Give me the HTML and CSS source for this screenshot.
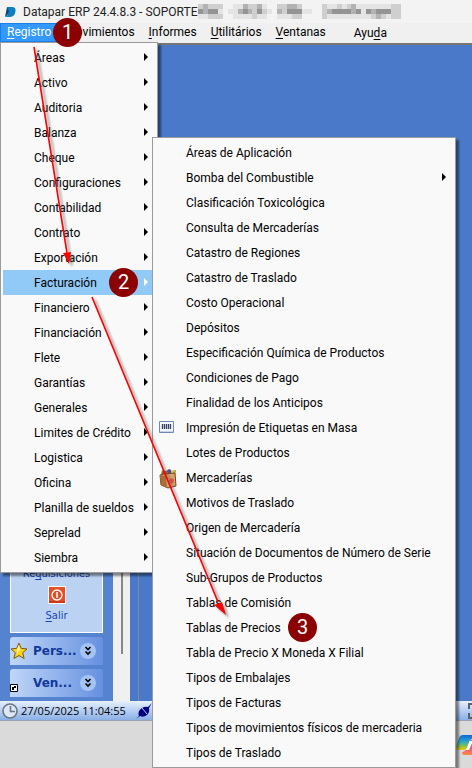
FILE: index.html
```
<!DOCTYPE html>
<html lang="es">
<head>
<meta charset="utf-8">
<meta name="viewport" content="width=device-width, initial-scale=1">
<title>Datapar ERP 24.4.8.3</title>
<link rel="stylesheet" href="styles.css">
</head>
<body>
<header class="titlebar">
  <svg class="logo" width="12" height="12" viewBox="0 0 12 12" aria-hidden="true"><path d="M2 1h5q4 0 3.500 4Q10 11 4 11H0q3-1 3-4z" fill="#0b7fc0"/><path d="M2 1l2 4-1 3q-1 2-3 3z" fill="#0a4b73"/></svg>
  <h1 class="title">Datapar ERP 24.4.8.3 - SOPORTE</h1>
  <svg class="mosaic" width="203" height="15" viewBox="0 0 41 3" preserveAspectRatio="none" shape-rendering="crispEdges" aria-hidden="true">
    <path fill="#e4e4e4" d="M0 0h5v3H0zM6 1h1v1H6zM7 0h7v3H7zM14 1h1v1h-1zM16 0h5v3h-5zM21 1h2v1h-2zM25 0h16v3H25z"/>
    <path fill="#cfcfcf" d="M0 0h5v1H0zM2 2h3v1H2zM8 1h6v1H8zM9 0h4v1H9zM11 2h1v1h-1zM16 0h5v1h-5zM17 1h1v1h-1zM19 2h2v1h-2zM25 0h1v3h-1zM28 0h1v1h-1zM30 0h2v1h-2zM39 0h2v3h-2zM35 2h3v1h-3z"/>
    <path fill="#b2b2b2" d="M1 0h1v2H1zM9 0h1v1H9zM12 0h1v1h-1zM8 1h1v1H8zM10 1h1v1h-1zM16 1h1v1h-1zM18 0h2v1h-2zM26 1h1v1h-1zM31 0h1v2h-1zM35 1h1v1h-1zM36 2h1v1h-1z"/>
    <path fill="#949494" d="M0 1h1v1H0zM2 1h2v1H2zM9 1h1v1H9zM12 1h1v1h-1zM18 1h3v1h-3zM27 1h4v1h-4zM32 1h1v1h-1zM34 1h1v1h-1zM36 1h3v1h-3z"/>
  </svg>
</header>
<nav class="menubar">
  <button class="menu-title open"><u>R</u>egistro</button>
  <button class="menu-title"><u>M</u>ovimientos</button>
  <button class="menu-title"><u>I</u>nformes</button>
  <button class="menu-title"><u>U</u>tilitários</button>
  <button class="menu-title"><u>V</u>entanas</button>
  <button class="menu-title help">Ayu<u>d</u>a</button>
</nav>
<main class="workspace">
  <aside class="sidebar">
    <div class="panel">
      <a href="#">Re<u>q</u>uisiciones</a>
      <svg width="18" height="18" viewBox="0 0 18 18" aria-hidden="true"><path fill="#fff" d="M0 0h18v18H0z"/><path fill="#e35028" d="M1 1h16v16H1z"/><path fill="#c83a18" d="M1 15h16v2H1z"/><circle cx="9" cy="9" r="5" fill="none" stroke="#fff" stroke-width="1.300"/><path stroke="#fff" stroke-width="1.500" d="M9 6v6"/></svg>
      <a href="#"><u>S</u>alir</a>
    </div>
    <button class="group">
      <svg width="18" height="18" viewBox="0 0 18 18" aria-hidden="true"><path d="M9 1l2.300 5.400 5.700.5-4.300 3.800 1.400 5.800L9 13.500l-5.100 3 1.400-5.800L1 6.900l5.700-.5z" fill="#fbd21c" stroke="#7a5a10"/><path d="M9 3l1 5-3 4 0-5z" fill="#fff3a0"/></svg>
      <span>Pers...</span>
      <svg width="16" height="16" viewBox="0 0 16 16" aria-hidden="true"><circle cx="8" cy="8" r="8" fill="#a5c3f3"/><path d="M5.500 4L8 6.500 10.500 4M5.500 8.500L8 11l2.500-2.500" fill="none" stroke="#000" stroke-width="1.600"/></svg>
    </button>
    <button class="group">
      <svg width="18" height="18" viewBox="0 0 18 18" aria-hidden="true"><path d="M.5 10.500h7v7h-7z" fill="#fff" stroke="#000"/><path d="M2 16v-3h2v-1h2v2H4v2z"/></svg>
      <span>Ven...</span>
      <svg width="16" height="16" viewBox="0 0 16 16" aria-hidden="true"><circle cx="8" cy="8" r="8" fill="#a5c3f3"/><path d="M5.500 4L8 6.500 10.500 4M5.500 8.500L8 11l2.500-2.500" fill="none" stroke="#000" stroke-width="1.600"/></svg>
    </button>
  </aside>
  <div class="scroll-track"><div class="scroll-thumb"></div></div>
  <div class="desktop"></div>
</main>
<footer class="statusbar">
  <svg width="16" height="16" viewBox="0 0 16 16" aria-hidden="true"><circle cx="8" cy="8" r="7" fill="#dce8f8" stroke="#6d7680" stroke-width="1.600"/><path d="M8.500 3v5.500H13" fill="none" stroke="#6d7680" stroke-width="1.600"/></svg>
  <time class="clock">27/05/2025 11:04:55</time>
  <svg width="16" height="16" viewBox="0 0 16 16" aria-hidden="true"><path d="M0 16l3-3q-2-5 3-8 3-2 6-1l4-4-3 5q1 4-2 7-4 3-7 1z" fill="#000080"/><path d="M6 5l5 6" stroke="#b8cdf0"/></svg>
  <svg class="frame-icon" width="16" height="16" viewBox="0 0 16 16" aria-hidden="true"><path d="M5 1H1v5M1 10v5h4M11 1h4v5M15 10v5h-4" fill="none" stroke="#59636e" stroke-width="2"/></svg>
</footer>
<div class="taskbar">
  <svg width="24" height="22" viewBox="0 0 24 22" aria-hidden="true">
    <defs><linearGradient id="cool" x1="0" y1="0" x2="0" y2="1"><stop offset="0" stop-color="#1565d8"/><stop offset=".45" stop-color="#25a9c8"/><stop offset=".75" stop-color="#8bc34a"/><stop offset="1" stop-color="#f5c400"/></linearGradient><linearGradient id="warm" x1="0" y1="0" x2="0" y2="1"><stop offset="0" stop-color="#9b5cf0"/><stop offset=".5" stop-color="#f0508c"/><stop offset="1" stop-color="#ff8a3c"/></linearGradient></defs>
    <path d="M17 21H8q-2 0-2-3 3 0 4-3l2-6q1-3 4-3h5q4 0 2 6l-2 6q-1 3-4 3z" fill="url(#warm)"/>
    <path d="M13 7h4l-4 9H9z" fill="#fff"/>
    <path d="M7 1h9q2 0 3 4h-3q-2 0-3 3l-2 6q-1 2-3 2H3q-4 0-2-6l2-6q1-3 4-3z" fill="url(#cool)"/>
  </svg>
</div>

<ul class="menu menu-main">
  <li><button class="sub">Áreas</button></li>
  <li><button class="sub">Activo</button></li>
  <li><button class="sub">Auditoria</button></li>
  <li><button class="sub">Balanza</button></li>
  <li><button class="sub">Cheque</button></li>
  <li><button class="sub">Configuraciones</button></li>
  <li><button class="sub">Contabilidad</button></li>
  <li><button class="sub">Contrato</button></li>
  <li><button class="sub">Exportación</button></li>
  <li><button class="sub selected">Facturación</button></li>
  <li><button class="sub">Financiero</button></li>
  <li><button class="sub">Financiación</button></li>
  <li><button class="sub">Flete</button></li>
  <li><button class="sub">Garantías</button></li>
  <li><button class="sub">Generales</button></li>
  <li><button class="sub">Limites de Crédito</button></li>
  <li><button class="sub">Logistica</button></li>
  <li><button class="sub">Oficina</button></li>
  <li><button class="sub">Planilla de sueldos</button></li>
  <li><button class="sub">Seprelad</button></li>
  <li><button class="sub">Siembra</button></li>
</ul>
<ul class="menu menu-sub">
  <li><button>Áreas de Aplicación</button></li>
  <li><button class="sub">Bomba del Combustible</button></li>
  <li><button>Clasificación Toxicológica</button></li>
  <li><button>Consulta de Mercaderías</button></li>
  <li><button>Catastro de Regiones</button></li>
  <li><button>Catastro de Traslado</button></li>
  <li><button>Costo Operacional</button></li>
  <li><button>Depósitos</button></li>
  <li><button>Especificación Química de Productos</button></li>
  <li><button>Condiciones de Pago</button></li>
  <li><button>Finalidad de los Anticipos</button></li>
  <li><button><svg class="item-icon" width="16" height="16" viewBox="0 0 16 16" aria-hidden="true"><path d="M.5 2.500h14v11H.5z" fill="#f4f7fd" stroke="#6f86b8"/><path d="M1 12h13v1H1z" fill="#c7d3ea"/><path d="M3.500 5v5M5.500 5v5M7.500 5v5M9.500 5v5M11.500 5v5" stroke="#34405c" stroke-width="1.300"/></svg>Impresión de Etiquetas en Masa</button></li>
  <li><button>Lotes de Productos</button></li>
  <li><button><svg class="item-icon" width="18" height="20" viewBox="0 0 18 20" aria-hidden="true"><path d="M2 5l1-4 4 1 3-2 3 2 4-1-1 5z" fill="#6a9a35"/><path d="M8 2l3-2 2 3-3 2z" fill="#5540c0"/><path d="M12 2l4-1-1 5-3-1z" fill="#e4c030"/><path d="M3 3l4-1 1 3-4 1z" fill="#d03828"/><path d="M1 6l4-1 11-1 1 13-8 2-7-3z" fill="#d8a26c" stroke="#76451f"/><path d="M1 6l6 1 1 12-6-3z" fill="#a86d3a"/><path d="M11 9l4 1v3l-3 2-2-3z" fill="#d85a45"/></svg>Mercaderías</button></li>
  <li><button>Motivos de Traslado</button></li>
  <li><button>Origen de Mercadería</button></li>
  <li><button>Situación de Documentos de Número de Serie</button></li>
  <li><button>Sub-Grupos de Productos</button></li>
  <li><button>Tablas de Comisión</button></li>
  <li><button>Tablas de Precios</button></li>
  <li><button>Tabla de Precio X Moneda X Filial</button></li>
  <li><button>Tipos de Embalajes</button></li>
  <li><button>Tipos de Facturas</button></li>
  <li><button>Tipos de movimientos físicos de mercaderia</button></li>
  <li><button>Tipos de Traslado</button></li>
</ul>

<svg class="arrows" width="240" height="630" viewBox="0 0 240 630" aria-hidden="true">
  <g class="arrow-shadow" transform="translate(3 3)"><path d="M34 47l33 206M92 297l126 305" stroke="#555" stroke-width="2"/><path d="M63 253l8-1-2 12zM214 605l8-3 4 13z" fill="#555"/></g>
  <path d="M34 47l33 206M92 297l126 305" stroke="#f00" stroke-width="1.600"/><path d="M63 253l8-1-2 12zM214 605l8-3 4 13z" fill="#f00"/>
</svg>
<span class="step step-1">1</span>
<span class="step step-2">2</span>
<span class="step step-3">3</span>
</body>
</html>
```
FILE: styles.css
```
* { box-sizing: border-box; }
body {
  position: relative;
  margin: 0;
  min-height: 100vh;
  display: flex;
  flex-direction: column;
  overflow-x: hidden;
  font: 12px/16px Roboto, "Open Sans", sans-serif;
  color: #000;
  background: #dadada;
}
button { margin: 0; padding: 0; border: 0; background: none; font: inherit; color: inherit; text-align: left; white-space: nowrap; }
u { text-underline-offset: 2px; }
svg { display: block; flex: none; }

.titlebar { display: flex; align-items: center; height: 23px; padding-left: 5px; background: #f3f3f3; }
.title { margin: 0 0 0 6px; font-size: 12px; font-weight: 400; color: #222; white-space: nowrap; }
.menubar { display: flex; height: 22px; background: #f0f0f0; border-bottom: 2px solid #777; }
.menu-title { height: 19px; padding: 0 7px 1px; }
.menu-title.open { background: #3399ff; color: #fff; box-shadow: inset 0 0 0 1px #1a80e6; }
.menu-title.help { margin-left: 14px; padding: 1px 7px 0; }

.workspace { flex: 1; display: flex; align-items: stretch; background: #4a79c9; border-bottom: 1px solid #e8eef8; }
.sidebar { width: 113px; padding: 0 10px 4px; display: flex; flex-direction: column; justify-content: flex-end; gap: 4px; background: #5583cf; }
.panel { display: flex; flex-direction: column; align-items: center; padding-bottom: 8px; border: 1px solid #fff; border-top: 0; background: #bcd2f2; font: 11px/16px "DejaVu Sans Condensed", "Open Sans", sans-serif; }
.panel a { color: #1545b5; text-decoration: none; }
.panel svg { margin: 4px 0; }
.group { display: flex; align-items: center; height: 28px; border-radius: 3px 3px 0 0; background: linear-gradient(90deg, #bfd6f7, #6690e0); }
.group span { flex: 1; padding-left: 5px; font: bold 12px/16px "DejaVu Sans", sans-serif; color: #10389a; }
.group svg:last-child { margin-right: 7px; }
.scroll-track { width: 17px; display: flex; justify-content: center; padding-bottom: 47px; background: #f0f0f0; }
.scroll-thumb { width: 2px; background: #888; }
.desktop { flex: 1; margin-left: 8px; border-left: 1px solid #8a8a8a; }

.statusbar { display: flex; align-items: center; height: 19px; padding-left: 2px; background: linear-gradient(#e1edff, #8aafe6); border-bottom: 1px solid #9aa4b0; }
.clock { flex: none; width: 115px; margin-left: 3px; font: 11px/16px "Open Sans", sans-serif; white-space: nowrap; }
.frame-icon { margin: 0 -12px 0 auto; }
.taskbar { display: flex; justify-content: flex-end; align-items: center; height: 47px; margin-right: -8px; background: #dadada; }

.menu { position: absolute; margin: 0; padding: 2px; list-style: none; background: #f9f9f9; border: 1px solid #9b9b9b; box-shadow: 3px 3px 2px rgba(0, 0, 0, .45); }
.menu-main { left: 0; top: 42px; width: 158px; }
.menu-sub { left: 152px; top: 137px; width: 304px; }
.menu button { position: relative; display: block; width: 100%; height: 25px; padding: 0 20px 0 31px; }
.menu .sub::after { content: ""; position: absolute; right: 7px; top: 8px; border: 4px solid transparent; border-left-color: #000; border-right: 0; }
.menu .selected { background: #91c9f7; }
.menu .selected::after { border-left-color: #fff; }
.item-icon { position: absolute; left: 4px; top: 4px; }

.arrows { position: absolute; left: 0; top: 0; pointer-events: none; }
.arrow-shadow { opacity: .5; filter: blur(1px); }
.step { position: absolute; width: 29px; height: 29px; border-radius: 50%; background: #8b0000; color: #fff; font-size: 20px; line-height: 29px; text-align: center; }
.step-1 { left: 53px; top: 18px; }
.step-2 { left: 109px; top: 268px; }
.step-3 { left: 288px; top: 613px; }
```
